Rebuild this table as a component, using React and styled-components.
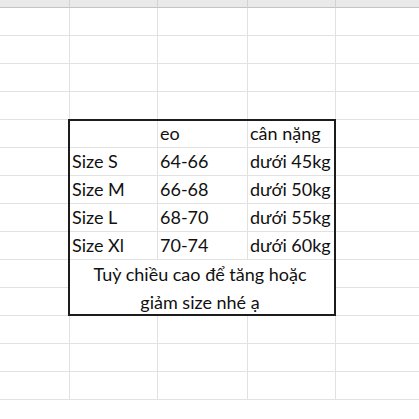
import styled, { createGlobalStyle } from "styled-components";

const GlobalStyle = createGlobalStyle`
  html, body { margin: 0; padding: 0; background: #fff; overflow: hidden; }
  body { font-family: Lato, "Noto Sans", sans-serif; }
`;

const BODY_ROWS = 14;

const Sheet = styled.div`
  display: grid;
  grid-template-columns: 70px 88px 90px 88px 1fr;
  grid-template-rows: 8px repeat(${BODY_ROWS}, 28px);
  width: 424px;
  height: 419px;
  overflow: hidden;
`;

const HeadCell = styled.div`
  background: #e9e9e9;
  border-right: 1px solid #d2d2d2;
  border-bottom: 1px solid #c4c4c4;
`;

const Cell = styled.div`
  border-right: 1px solid #e2e2e2;
  border-bottom: 1px solid #e2e2e2;
`;

const Box = styled.div`
  grid-column: 2 / 5;
  grid-row: 6 / 13;
  margin: -1px 0 0 -2px;
  border: 2px solid #1c1c1c;
  background: #fff;
  display: grid;
  grid-template-columns: 88px 90px 1fr;
  grid-template-rows: 27px repeat(4, 28px) 1fr;
  color: #111;
  font-size: 18px;
  z-index: 1;
`;

const TCell = styled.div`
  border-right: ${p => (p.$last ? "none" : "1px solid #e2e2e2")};
  border-bottom: 1px solid #e2e2e2;
  display: flex;
  align-items: flex-end;
  padding: 0 0 4px 2px;
  white-space: nowrap;
  line-height: 20px;
`;

const Note = styled.div`
  grid-column: 1 / 4;
  text-align: center;
  line-height: 28px;
  padding-right: 4px;
  white-space: nowrap;
`;

const rows = [
  ["", "eo", "cân nặng"],
  ["Size S", "64-66", "dưới 45kg"],
  ["Size M", "66-68", "dưới 50kg"],
  ["Size L", "68-70", "dưới 55kg"],
  ["Size Xl", "70-74", "dưới 60kg"],
];

export default function App() {
  const cells = [];
  for (let r = 0; r < BODY_ROWS; r++) {
    for (let c = 0; c < 5; c++) {
      const inBox = r >= 4 && r <= 10 && c >= 1 && c <= 3;
      if (!inBox) cells.push(<Cell key={`${r}-${c}`} style={{ gridRow: r + 2, gridColumn: c + 1 }} />);
    }
  }

  return (
    <>
      <GlobalStyle />
      <Sheet>
        {[0, 1, 2, 3, 4].map(i => (
          <HeadCell key={i} />
        ))}
        {cells}
        <Box>
          {rows.map((row, i) =>
            row.map((t, j) => (
              <TCell key={`${i}-${j}`} $last={j === 2}>
                {t}
              </TCell>
            ))
          )}
          <Note>
            Tuỳ chiều cao để tăng hoặc
            <br />
            giảm size nhé ạ
          </Note>
        </Box>
      </Sheet>
    </>
  );
}
